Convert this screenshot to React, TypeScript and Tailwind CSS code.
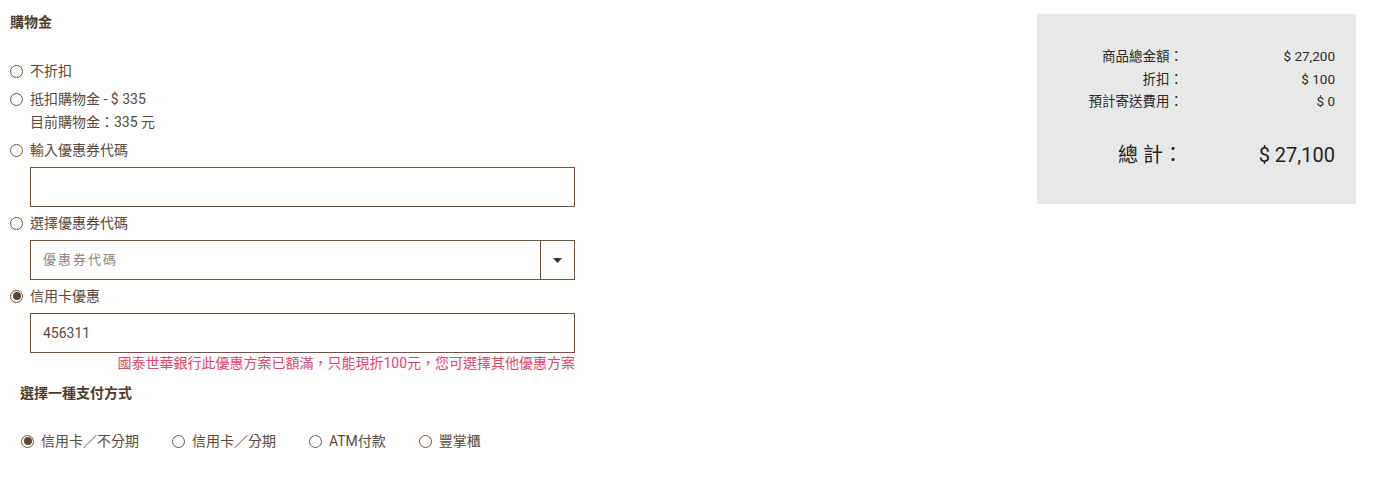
import React from "react";

const font = { fontFamily: '"Roboto", "Noto Sans CJK TC", sans-serif' };

function Radio({ checked = false }: { checked?: boolean }) {
  return (
    <span className="w-[13px] h-[13px] rounded-full border-[1.5px] border-[#6b5644] flex items-center justify-center shrink-0 box-border">
      {checked && <span className="w-[8px] h-[8px] rounded-full bg-[#5c4737]" />}
    </span>
  );
}

function RadioRow({ label, checked = false, className = "" }: { label: string; checked?: boolean; className?: string }) {
  return (
    <div className={`flex items-center gap-[7px] h-[22px] text-[14px] text-[#5a4a3d] ${className}`}>
      <Radio checked={checked} />
      <span>{label}</span>
    </div>
  );
}

export default function App() {
  return (
    <div className="w-[1382px] h-[483px] bg-white flex" style={font}>
      <div className="w-[575px] pt-[12px] pl-[10px]">
        <div className="h-[20px] leading-[20px] text-[14px] font-bold text-[#4b3c30]">購物金</div>

        <RadioRow label="不折扣" className="mt-[28px]" />
        <RadioRow label="抵扣購物金 - $ 335" className="mt-[6px]" />
        <div className="mt-[1px] h-[22px] leading-[22px] pl-[20px] text-[14px] text-[#5a4a3d]">目前購物金：335 元</div>

        <RadioRow label="輸入優惠券代碼" className="mt-[6px]" />
        <div className="mt-[6px] ml-[20px] h-[40px] border border-[#6b5644]" />

        <RadioRow label="選擇優惠券代碼" className="mt-[5px]" />
        <div className="mt-[6px] ml-[20px] h-[40px] border border-[#6b5644] flex">
          <div className="flex-1 flex items-center pl-[12px] text-[13px] tracking-[2px] text-[#8c8385]">優惠券代碼</div>
          <div className="w-[34px] border-l border-[#6b5644] flex items-center justify-center">
            <svg width="9" height="5" viewBox="0 0 9 5">
              <path d="M0 0h9L4.5 5z" fill="#333" />
            </svg>
          </div>
        </div>

        <RadioRow label="信用卡優惠" checked className="mt-[5px]" />
        <div className="mt-[6px] ml-[20px] h-[40px] border border-[#6b5644] flex items-center pl-[12px] text-[14px] text-[#5a4a3d]">
          456311
        </div>
        <div className="mt-[1px] h-[18px] leading-[18px] text-right text-[14px] text-[#e0476c]">
          國泰世華銀行此優惠方案已額滿，只能現折100元，您可選擇其他優惠方案
        </div>

        <div className="mt-[11px] ml-[10px] h-[20px] leading-[20px] text-[14px] font-bold text-[#4b3c30]">選擇一種支付方式</div>
        <div className="mt-[27px] ml-[11px] flex gap-[33px]">
          <RadioRow label="信用卡／不分期" checked />
          <RadioRow label="信用卡／分期" />
          <RadioRow label="ATM付款" />
          <RadioRow label="豐掌櫃" />
        </div>
      </div>

      <div className="ml-auto mr-[26px] mt-[14px] w-[319px] h-[190px] bg-[#e8e8e8] pt-[31px] pr-[21px] text-[#2b2b2b]">
        <div className="grid grid-cols-[146px_1fr] text-[13.5px] leading-[22.5px]">
          <div className="text-right">商品總金額：</div>
          <div className="text-right">$ 27,200</div>
          <div className="text-right">折扣：</div>
          <div className="text-right">$ 100</div>
          <div className="text-right">預計寄送費用：</div>
          <div className="text-right">$ 0</div>
        </div>
        <div className="mt-[27px] grid grid-cols-[146px_1fr] text-[20px] leading-[30px] text-[#1f1f1f]">
          <div className="text-right">總 計：</div>
          <div className="text-right">$ 27,100</div>
        </div>
      </div>
    </div>
  );
}
